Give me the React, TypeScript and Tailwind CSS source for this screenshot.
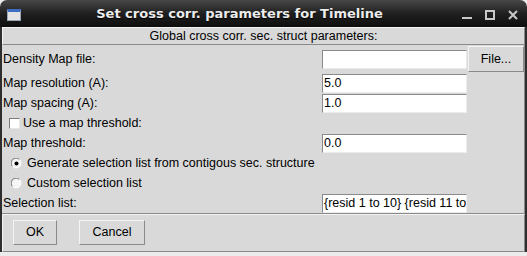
import React from 'react';

const font = { fontFamily: '"Liberation Sans", Arial, sans-serif' };

function Entry({ value }: { value: string }) {
    return (
        <div className="w-[145px] h-[19px] bg-white border border-t-[#8a8a8a] border-l-[#8a8a8a] border-b-[#ececec] border-r-[#ececec] overflow-hidden whitespace-nowrap text-[12.5px] leading-[17px] text-black pl-[1px]">
            {value}
        </div>
    );
}

function Radio({ checked }: { checked?: boolean }) {
    return (
        <svg width="11" height="11" viewBox="0 0 11 11" className="shrink-0">
            <circle cx="5.5" cy="5.5" r="4.5" fill="#f6f6f6" />
            <path d="M1.5 8.5 A4.5 4.5 0 0 1 8.5 1.5" fill="none" stroke="#7a7a7a" strokeWidth="1" />
            <path d="M8.5 1.5 A4.5 4.5 0 0 1 1.5 8.5" fill="none" stroke="#ffffff" strokeWidth="1" />
            {checked && <circle cx="5.5" cy="5.5" r="2" fill="#000" />}
        </svg>
    );
}

function Button({ text, className }: { text: string; className?: string }) {
    return (
        <div className={`flex items-center justify-center bg-[#d9d9d9] border border-t-[#f4f4f4] border-l-[#f4f4f4] border-b-[#8a8a8a] border-r-[#8a8a8a] text-[12.5px] text-black ${className ?? ''}`}>
            {text}
        </div>
    );
}

export default function App() {
    return (
        <div className="w-[527px] h-[256px] bg-[#ececec] overflow-hidden" style={font}>
            {/* title bar */}
            <div className="h-[27px] rounded-t-[7px] bg-gradient-to-b from-[#484848] via-[#202020] to-[#0e0e0e] flex items-center relative">
                <div className="absolute left-[7px] top-[9px] w-[14px] h-[12px] bg-[#e4e4e4] border border-[#9aa6b8] border-t-[3px] border-t-[#3f6fc4]" />
                <div
                    className="flex-1 text-center text-[13px] font-bold text-[#ececec] mr-[48px]"
                    style={{ fontFamily: '"DejaVu Sans", sans-serif', textShadow: '0 1px 1px #000' }}
                >
                    Set cross corr. parameters for Timeline
                </div>
                <div className="absolute left-[462px] top-[17px] w-[10px] h-[2px] bg-[#c8c8c8]" />
                <div className="absolute left-[485px] top-[10px] w-[10px] h-[10px] border-2 border-[#c8c8c8]" />
                <svg className="absolute left-[508px] top-[10px]" width="10" height="10" viewBox="0 0 10 10">
                    <path d="M1 1 L9 9 M9 1 L1 9" stroke="#c8c8c8" strokeWidth="2" />
                </svg>
            </div>

            {/* body */}
            <div className="h-[225px] bg-[#d9d9d9] border-l-2 border-r-2 border-[#2e2e2e] flex flex-col">
                <div className="h-[18px] border border-t-[#f4f4f4] border-l-[#f4f4f4] border-b-[#8a8a8a] border-r-[#8a8a8a] flex items-center justify-center text-[12.5px] text-black">
                    Global cross corr. sec. struct parameters:
                </div>

                <div className="h-[169px] border-r border-r-[#8a8a8a] border-b border-b-[#8a8a8a] flex flex-col text-[12.5px] text-black">
                    <div className="h-[28px] flex items-center">
                        <div className="w-[320px] pl-[1px]">Density Map file:</div>
                        <Entry value="" />
                        <Button text="File..." className="ml-[1px] w-[56px] h-[26px]" />
                    </div>
                    <div className="h-[20px] flex items-center">
                        <div className="w-[320px] pl-[1px]">Map resolution (A):</div>
                        <Entry value="5.0" />
                    </div>
                    <div className="h-[20px] flex items-center">
                        <div className="w-[320px] pl-[1px]">Map spacing (A):</div>
                        <Entry value="1.0" />
                    </div>
                    <div className="h-[20px] flex items-center pl-[7px] gap-[3px]">
                        <div className="w-[11px] h-[11px] bg-white border border-t-[#7a7a7a] border-l-[#7a7a7a] border-b-[#e6e6e6] border-r-[#e6e6e6]" />
                        <div>Use a map threshold:</div>
                    </div>
                    <div className="h-[20px] flex items-center">
                        <div className="w-[320px] pl-[1px]">Map threshold:</div>
                        <Entry value="0.0" />
                    </div>
                    <div className="h-[20px] flex items-center pl-[9px] gap-[5px]">
                        <Radio checked />
                        <div>Generate selection list from contigous sec. structure</div>
                    </div>
                    <div className="h-[20px] flex items-center pl-[9px] gap-[5px]">
                        <Radio />
                        <div>Custom selection list</div>
                    </div>
                    <div className="h-[20px] flex items-center">
                        <div className="w-[320px] pl-[1px]">Selection list:</div>
                        <Entry value="{resid 1 to 10} {resid 11 to 20}" />
                    </div>
                </div>

                <div className="h-[38px] border border-t-[#f4f4f4] border-l-[#f4f4f4] border-b-[#8a8a8a] border-r-[#8a8a8a] flex items-start pt-[5px] pl-[10px] gap-[22px]">
                    <Button text="OK" className="w-[44px] h-[25px]" />
                    <Button text="Cancel" className="w-[66px] h-[25px]" />
                </div>
            </div>
        </div>
    );
}
